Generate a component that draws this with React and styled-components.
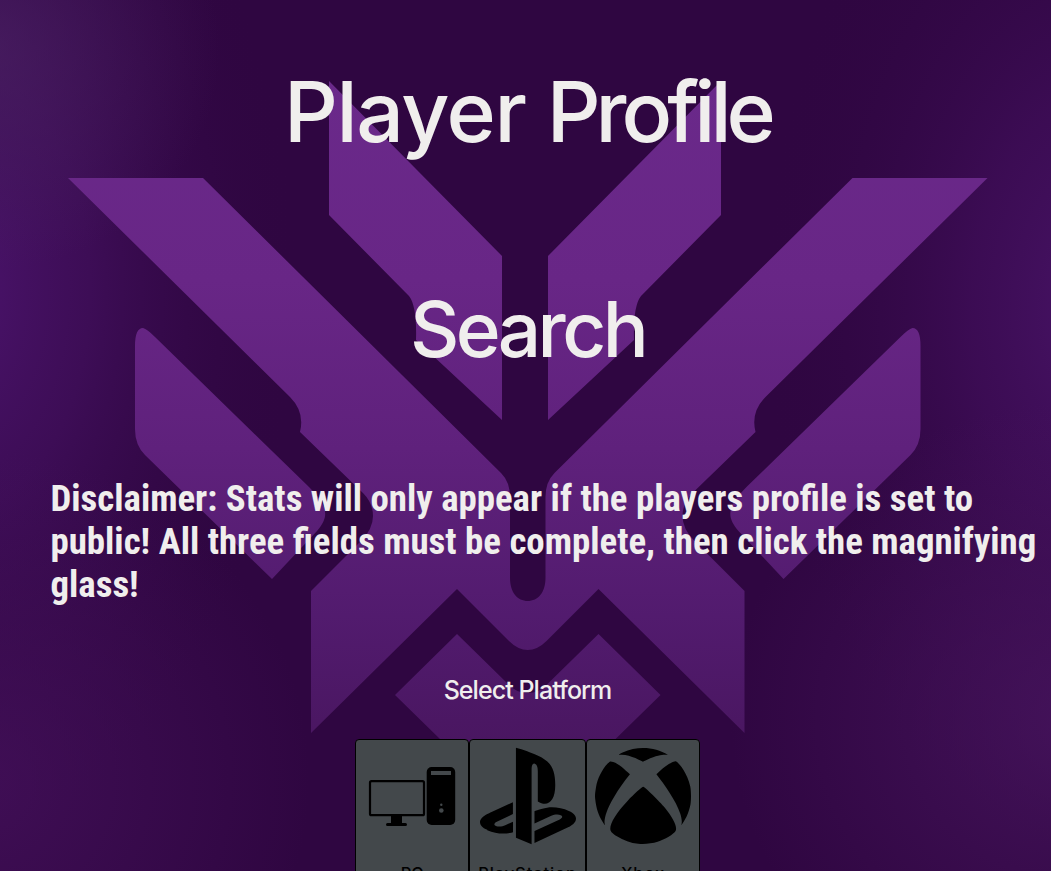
import React from "react";
import styled, { createGlobalStyle } from "styled-components";
import { SiPlaystation } from "react-icons/si";
import { FaXbox } from "react-icons/fa";

const GlobalStyle = createGlobalStyle`
  * { box-sizing: border-box; }
  body { margin: 0; background: #2f0641; color: #f0eeed; }
`;

const Page = styled.main`
  position: relative;
  height: 100vh;
  overflow: hidden;
  display: flex;
  flex-direction: column;
  align-items: center;
  padding-left: 4px;
  font-family: Inter, "Liberation Sans", sans-serif;
`;

const Backdrop = styled.svg`
  position: absolute;
  inset: 0;
  width: 1051px;
  height: 871px;
  z-index: -1;
`;

const Title = styled.h1`
  margin: ${(p) => p.$top}px 0 0;
  font-size: ${(p) => p.$size}px;
  line-height: 100px;
  font-weight: 530;
  white-space: nowrap;
`;

const Word = styled.span`
  letter-spacing: ${(p) => p.$spacing}px;
`;

const Disclaimer = styled.p`
  align-self: stretch;
  margin: 98px 0 0;
  padding-left: 46.5px;
  font: bold 36.85px/43px "Roboto Condensed", Roboto, sans-serif;
`;

const PlatformHeading = styled.h2`
  margin: 69px 0 0;
  font-size: 25px;
  line-height: 30px;
  font-weight: 540;
  letter-spacing: -0.95px;
`;

const Platforms = styled.div`
  display: flex;
  margin-top: 34px;
`;

const PlatformCard = styled.button`
  display: flex;
  flex-direction: column;
  align-items: center;
  flex: none;
  width: ${(p) => p.$width}px;
  height: 160px;
  padding: 8px 0 0;
  border: 1px solid #000;
  border-radius: 4px;
  background: #43484b;
  color: #000;
  font: 500 16.5px/20px Inter, sans-serif;

  svg { flex: none; overflow: visible; }
`;

const PlatformLabel = styled.span`
  margin-top: 18.5px;
  letter-spacing: ${(p) => p.$spacing || 0}px;
`;

function EmblemBackdrop() {
  return (
    <Backdrop viewBox="0 0 1051 871" aria-hidden="true">
      <defs>
        <linearGradient id="emblem" gradientUnits="userSpaceOnUse" x1="0" y1="80" x2="0" y2="750">
          <stop offset="0" stopColor="#6a298a" />
          <stop offset="0.3" stopColor="#682686" />
          <stop offset="0.55" stopColor="#5f217c" />
          <stop offset="0.8" stopColor="#521b6e" />
          <stop offset="1" stopColor="#491660" />
        </linearGradient>
        <radialGradient id="leftGlow" gradientUnits="userSpaceOnUse" cx="0" cy="0" r="1" gradientTransform="translate(-50 290) scale(350 560)">
          <stop offset="0" stopColor="#4c146e" />
          <stop offset="0.4" stopColor="#43105f" stopOpacity="0.7" />
          <stop offset="1" stopColor="#2f0641" stopOpacity="0" />
        </radialGradient>
        <radialGradient id="rightGlow" gradientUnits="userSpaceOnUse" cx="0" cy="0" r="1" gradientTransform="translate(1110 310) scale(350 560)">
          <stop offset="0" stopColor="#491468" />
          <stop offset="0.4" stopColor="#420f5d" stopOpacity="0.65" />
          <stop offset="1" stopColor="#2f0641" stopOpacity="0" />
        </radialGradient>
        <radialGradient id="cornerGlow" gradientUnits="userSpaceOnUse" cx="0" cy="0" r="1" gradientTransform="translate(-10 50) scale(230 220)">
          <stop offset="0" stopColor="#4a2263" stopOpacity="0.65" />
          <stop offset="1" stopColor="#4a2263" stopOpacity="0" />
        </radialGradient>
        <radialGradient id="lowGlow" gradientUnits="userSpaceOnUse" cx="0" cy="0" r="1" gradientTransform="translate(1080 720) scale(350 320)">
          <stop offset="0" stopColor="#48155f" stopOpacity="0.8" />
          <stop offset="1" stopColor="#48155f" stopOpacity="0" />
        </radialGradient>
        <radialGradient id="lowLeftGlow" gradientUnits="userSpaceOnUse" cx="0" cy="0" r="1" gradientTransform="translate(-20 780) scale(330 330)">
          <stop offset="0" stopColor="#45115c" stopOpacity="0.75" />
          <stop offset="1" stopColor="#45115c" stopOpacity="0" />
        </radialGradient>
        <g id="arm">
          <path d="M68 178H203L501 473Q510 482 510 497V578C510 592 517 601 528 601V650Q518 650 509 641L457 589L311 733V591L361 541Q373 529 373 516Q373 503 363 493L300 432Q305 412 290 397Z" />
          <path d="M135 346Q135 328 143 328Q147 329 155 337L309 487C329 507 329 517 317 531L272 579L145 455Q135 445 135 429Z" />
          <path d="M457 634L508 684Q516 693 528 693V784H486L395 695Z" />
        </g>
      </defs>
      <rect width="1051" height="871" fill="#2f0641" />
      <rect width="1051" height="871" fill="url(#leftGlow)" />
      <rect width="1051" height="871" fill="url(#rightGlow)" />
      <rect width="1051" height="871" fill="url(#cornerGlow)" />
      <rect width="1051" height="871" fill="url(#lowGlow)" />
      <rect width="1051" height="871" fill="url(#lowLeftGlow)" />
      <g fill="url(#emblem)">
        <use href="#arm" />
        <use href="#arm" transform="translate(1055.5 0) scale(-1 1)" />
        <path d="M329 81L502 256V420L416 340Q417 306 409 296L329 215Z" />
        <path d="M721 81L548 256V420L634 340Q633 306 641 296L721 215Z" />
      </g>
    </Backdrop>
  );
}

function PcIcon() {
  return (
    <svg width="96" height="96" viewBox="0 0 96 96" aria-hidden="true">
      <rect x="6" y="33.2" width="54" height="34" rx="1.5" fill="none" stroke="#000" strokeWidth="2.2" />
      <path d="M27 68h11v7h3.500a1.500 1.500 0 0 1 0 3h-18a1.500 1.500 0 0 1 0-3H27z" />
      <rect x="62.700" y="19" width="28.500" height="58" rx="5" />
      <path d="M67 23h20v4H67z" fill="#43484b" />
      <circle cx="77.300" cy="56.700" r="1.200" fill="#43484b" />
      <circle cx="77.300" cy="62.500" r="2.300" fill="#43484b" />
    </svg>
  );
}

export default function App() {
  return (
    <>
      <GlobalStyle />
      <Page>
        <EmblemBackdrop />
        <Title $top={62} $size={84}>
          <Word $spacing={-1.4}>Player </Word>
          <Word $spacing={-5}>Profile</Word>
        </Title>
        <Title $top={117} $size={76.5}>
          <Word $spacing={-3.6}>Search</Word>
        </Title>
        <Disclaimer>
          Disclaimer: Stats will only appear if the players profile is set to public! All three
          fields must be complete, then click the magnifying glass!
        </Disclaimer>
        <PlatformHeading>Select Platform</PlatformHeading>
        <Platforms>
          <PlatformCard $width={114}>
            <PcIcon />
            <PlatformLabel>PC</PlatformLabel>
          </PlatformCard>
          <PlatformCard $width={117}>
            <SiPlaystation viewBox="0 2.64 24 18.72" size={96} preserveAspectRatio="none" />
            <PlatformLabel $spacing={0.9}>PlayStation</PlatformLabel>
          </PlatformCard>
          <PlatformCard $width={114}>
            <FaXbox viewBox="8 8 496 496" size={96} />
            <PlatformLabel $spacing={0.9}>Xbox</PlatformLabel>
          </PlatformCard>
        </Platforms>
      </Page>
    </>
  );
}
